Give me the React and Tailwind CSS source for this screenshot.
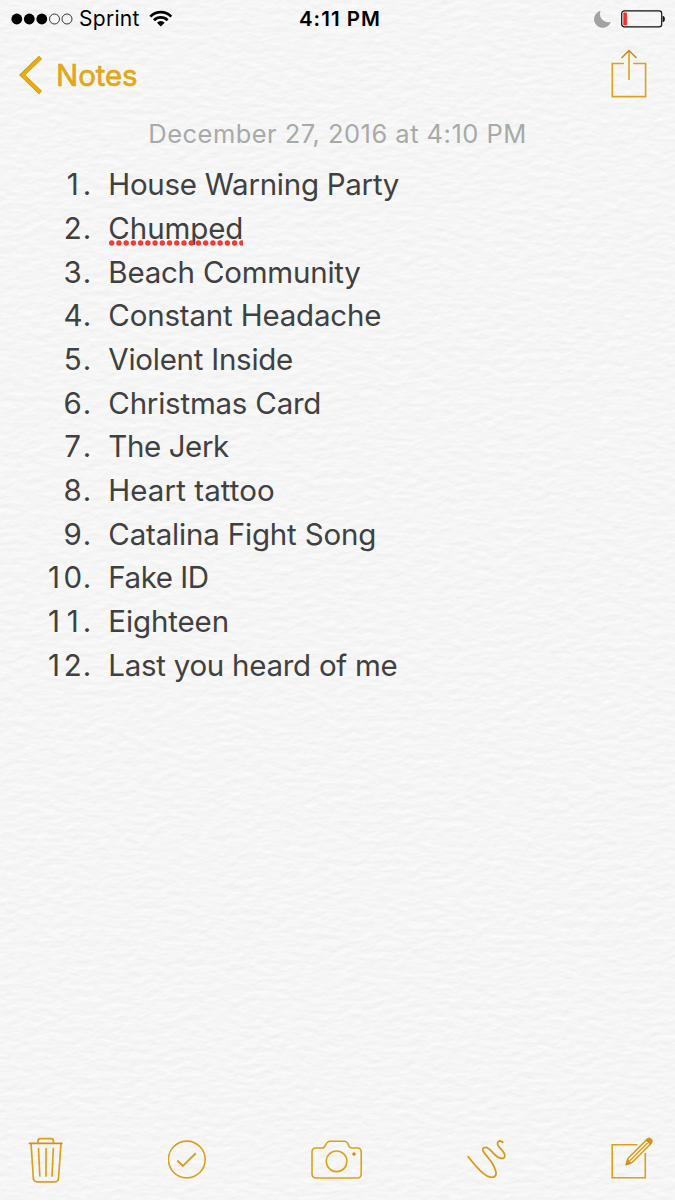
import React from "react";

const songs = [
  { title: "House Warning Party", tracking: "tracking-[-0.27px]" },
  { title: "Chumped", tracking: "tracking-[-0.08px]", misspelled: true },
  { title: "Beach Community", tracking: "tracking-[-0.22px]" },
  { title: "Constant Headache", tracking: "tracking-[-0.18px]" },
  { title: "Violent Inside", tracking: "tracking-[-0.25px]" },
  { title: "Christmas Card", tracking: "tracking-[-0.22px]" },
  { title: "The Jerk", tracking: "tracking-[-0.4px]" },
  { title: "Heart tattoo", tracking: "tracking-[0.08px]" },
  { title: "Catalina Fight Song", tracking: "tracking-[-0.18px]" },
  { title: "Fake ID", tracking: "tracking-[-0.45px]" },
  { title: "Eighteen", tracking: "tracking-[-0.12px]" },
  { title: "Last you heard of me", tracking: "tracking-[-0.27px]" },
];

function PaperTexture() {
  return (
    <svg className="absolute inset-0 h-full w-full" aria-hidden="true">
      <filter id="paper" x="0" y="0" width="100%" height="100%" colorInterpolationFilters="sRGB">
        <feTurbulence type="fractalNoise" baseFrequency="0.08 0.16" numOctaves="3" seed="8" result="noise" />
        <feDiffuseLighting in="noise" lightingColor="#ffffff" surfaceScale="0.14" diffuseConstant="1.09">
          <feDistantLight azimuth="80" elevation="62" />
        </feDiffuseLighting>
      </filter>
      <rect width="100%" height="100%" filter="url(#paper)" />
    </svg>
  );
}

function StatusBar() {
  return (
    <div className="grid h-[37px] grid-cols-[1fr_auto_1fr] items-center pl-[11px] pr-[10px] text-black">
      <div className="flex items-center">
        <svg width="63" height="12" viewBox="0 0 63 12">
          <circle cx="5.8" cy="6" r="5.4" />
          <circle cx="18.3" cy="6" r="5.4" />
          <circle cx="30.8" cy="6" r="5.4" />
          <circle cx="43.5" cy="6" r="5" fill="none" stroke="#222" strokeWidth="0.9" />
          <circle cx="56" cy="6" r="5" fill="none" stroke="#222" strokeWidth="0.9" />
        </svg>
        <span className="ml-[5px] pt-px text-[21px] leading-9 tracking-[0.3px]">Sprint</span>
        <svg className="ml-[9px]" width="24" height="18" viewBox="0 0 24 18">
          <g fill="none" stroke="#000" strokeWidth="2.7">
            <path d="M1.3 6.6 A14.6 14.6 0 0 1 22.3 6.6" />
            <path d="M5 10.2 A9.6 9.6 0 0 1 18.6 10.2" />
          </g>
          <path d="M7.9 12.7 A5.6 5.6 0 0 1 15.7 12.7 L11.8 16.6 Z" />
        </svg>
      </div>
      <span className="pl-[4px] pt-px text-[20.5px] font-semibold leading-9 tracking-[1.05px]">4:11 PM</span>
      <div className="flex items-center justify-end">
        <svg width="18" height="18" viewBox="0 0 18 18">
          <path d="M6.6 0.8 A8.6 8.6 0 1 0 16.9 11.7 A8.2 8.2 0 0 1 6.6 0.8 Z" fill="#a2a2a2" />
        </svg>
        <svg className="ml-[9px]" width="44" height="18" viewBox="0 0 44 18">
          <rect x="0.7" y="0.8" width="40" height="16" rx="2.6" fill="none" stroke="#111" strokeWidth="1.2" />
          <rect x="2.3" y="2.4" width="3.6" height="12.8" rx="0.8" fill="#fb2c2c" />
          <path d="M41.6 6 h0.8 q1.5 0.4 1.5 3 t-1.5 3 h-0.8 z" fill="#111" />
        </svg>
      </div>
    </div>
  );
}

function NavBar() {
  return (
    <div className="flex h-[71px] justify-between pl-[19px] pr-[28px]">
      <div className="flex h-[76px] items-center text-[#e2ab15]">
        <svg width="25" height="40" viewBox="0 0 25 40" fill="none">
          <path d="M21.5 2.4 L3.2 20 L21.5 37.6" stroke="#c98c1d" strokeWidth="4.4" />
          <path d="M21.5 2.7 L3.4 20.2 L21.5 37.6" stroke="#e6ae10" strokeWidth="3.4" />
        </svg>
        <span className="ml-3 text-[29.5px] leading-10 tracking-[-0.1px] [-webkit-text-stroke:0.6px_#dca216]">Notes</span>
      </div>
      <svg className="mt-[12px]" width="36" height="49" viewBox="0 0 36 49" fill="none" strokeWidth="1.6">
        <path d="M13 14.5 H1.3 V47.6 H34.6 V14.5 H22.2" stroke="#dda31c" />
        <path d="M18 31 V2" stroke="#dda31c" />
        <path d="M10.5 9 L18 1.7 L25.5 9" stroke="#c98a20" />
      </svg>
    </div>
  );
}

function ItemNumber({ value }) {
  return (
    <span className="flex w-[92px] justify-end">
      {String(value).split("").map((digit, i) => (
        <span key={i} className="w-[18.6px] text-center">{digit}</span>
      ))}
      <span className="w-[10px] text-center">.</span>
    </span>
  );
}

function SongList() {
  return (
    <ol className="mt-[11px] text-[29.5px] text-[#3f4040]">
      {songs.map((song, i) => (
        <li key={song.title} className="flex h-[43.68px] items-center leading-[43px]">
          <ItemNumber value={i + 1} />
          <span className={`relative ml-[16.3px] whitespace-nowrap ${song.tracking}`}>
            {song.title}
            {song.misspelled && (
              <svg className="absolute left-[0.5px] top-[33px]" width="134" height="6" viewBox="0 0 134 6">
                <path d="M2.7 3 H134" stroke="#f23b35" strokeWidth="5.4" strokeLinecap="round" strokeDasharray="0 7.23" />
              </svg>
            )}
          </span>
        </li>
      ))}
    </ol>
  );
}

function Toolbar() {
  return (
    <div className="flex h-[72px] items-start justify-between pl-[28px] pr-[22px] pt-[9px]">
      <svg width="36" height="47" viewBox="0 0 36 47" fill="none" stroke="#dea01a" strokeWidth="1.7" strokeLinecap="round">
        <path d="M3 6.5 L5.4 41.5 Q5.7 44.8 9 44.8 H27 Q30.2 44.8 30.5 41.5 L33 6.5" />
        <path d="M1.5 6.4 H33.8" stroke="#d08d1d" />
        <path d="M10 5.8 V4 Q10 1.6 12.5 1.6 H23 Q25.5 1.6 25.5 4 V5.8" />
        <path d="M10.5 11.5 L11.8 39 M18 11.5 V39 M25.3 11.5 L24 39" />
      </svg>
      <svg className="mt-[3px]" width="40" height="40" viewBox="1.2 0 40 40" fill="none" stroke="#dd9e1a" strokeWidth="1.6">
        <circle cx="20" cy="19.5" r="18.4" />
        <path d="M10.5 20.5 L16 26 L29 13.3" strokeWidth="1.9" />
      </svg>
      <svg className="mt-[3px]" width="52" height="40" viewBox="0 0 52 40" fill="none" stroke="#dda21a" strokeWidth="1.6">
        <path d="M5 8 H11 Q13.4 8 14.4 5.4 Q16 1.2 19 1.2 H33.5 Q36 1.2 37.6 5.2 Q38.7 8 41 8 H46.3 Q50.2 8 50.2 12 V34 Q50.2 38 46.3 38 H5 Q1 38 1 34 V12 Q1 8 5 8 Z" />
        <circle cx="25.6" cy="21.3" r="10.3" />
        <circle cx="43" cy="14" r="1.5" fill="#c58a20" strokeWidth="0.6" />
      </svg>
      <svg className="mt-[3px]" width="40" height="40" viewBox="0 0 40 40" fill="none" stroke="#d99a1b" strokeWidth="1.8" strokeLinecap="round">
        <path d="M1.2 16.7 C5 21.5 9 26.5 13.5 30.8 C17.5 34.7 21.5 37.3 25 37.3 C28.5 37.3 29.6 34.5 28.8 31.5 C28 28 26.5 25 24.5 22 L17 12.5 C14.6 9 16 7.3 18.6 7.3 C21.5 7.3 23.5 10 26 12.8 C29 16 32.5 18.5 35 18.5 C37.5 18.4 38.4 16.4 37.4 13.8 C36 10.2 32.5 8.5 31 5.3 C30 2.8 31 1 33 1 C34.4 1 35.2 1.6 35.8 2.4" />
      </svg>
      <svg width="43" height="44" viewBox="0 0 43 44" fill="none" stroke="#dca01b" strokeWidth="1.6">
        <path d="M27.5 7.8 H2.2 V40.8 H35.3 V16" />
        <path d="M16.3 27.5 L18 21.5 L37 2.5 L41 6.5 L22 25.5 Z" />
        <path d="M19.5 24 L37.5 6" strokeWidth="1.4" />
        <path d="M36 3.2 L37.8 1.4 Q39.6 .2 41.4 2 Q43 3.8 41.8 5.6 L40.2 7.4 Z M16 28 L17.5 22.5 L21 26 Z" fill="#d2951e" stroke="#c98a20" strokeWidth="0.8" />
      </svg>
    </div>
  );
}

export default function App() {
  return (
    <div className="relative h-[1200px] w-[675px] overflow-hidden bg-[#f6f6f6] font-['Inter','Liberation_Sans',sans-serif]">
      <PaperTexture />
      <div className="relative flex h-full flex-col">
        <StatusBar />
        <NavBar />
        <div className="mt-[8px] text-center text-[25.5px] leading-9 tracking-[0.47px] text-[#a7aaa9]">
          December 27, 2016 at 4:10 PM
        </div>
        <SongList />
        <div className="grow" />
        <Toolbar />
      </div>
    </div>
  );
}
